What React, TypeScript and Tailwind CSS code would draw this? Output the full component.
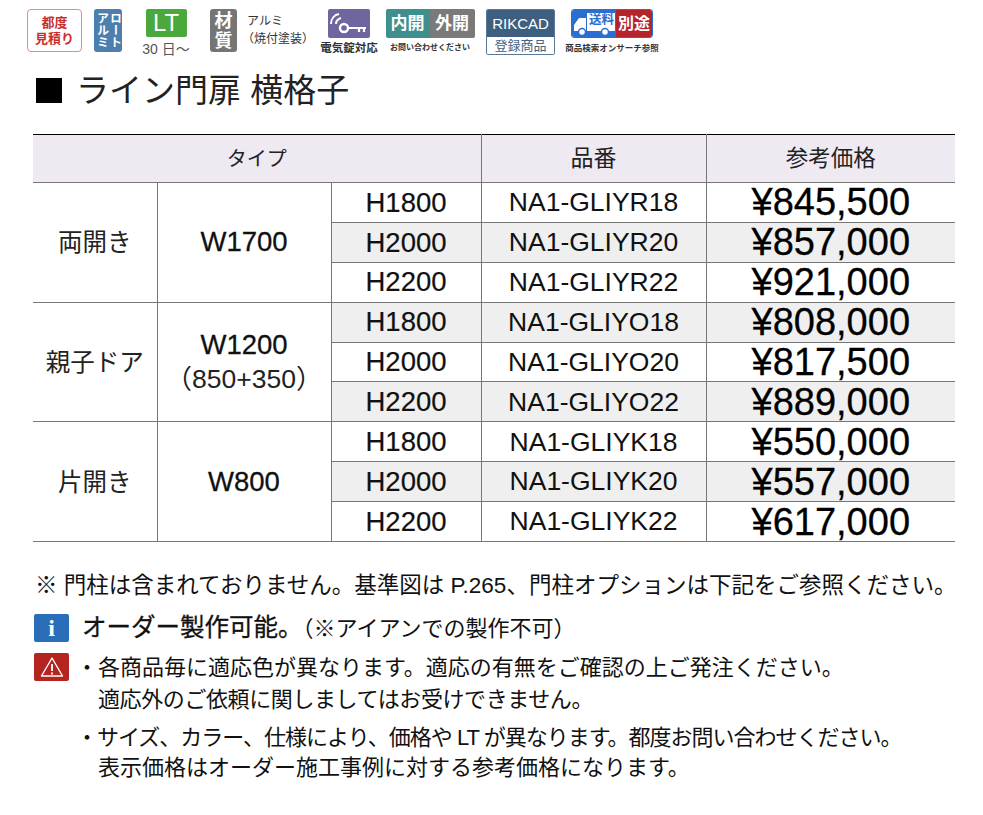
const FONT = { fontFamily: '"Liberation Sans","Noto Sans CJK JP",sans-serif' };

type Row = { h: string; code: string; price: string };
type Group = { type: string; w: string; sub?: string; rows: Row[] };

const groups: Group[] = [
  { type: "両開き", w: "W1700", rows: [
    { h: "H1800", code: "NA1-GLIYR18", price: "¥845,500" },
    { h: "H2000", code: "NA1-GLIYR20", price: "¥857,000" },
    { h: "H2200", code: "NA1-GLIYR22", price: "¥921,000" },
  ]},
  { type: "親子ドア", w: "W1200", sub: "（850+350）", rows: [
    { h: "H1800", code: "NA1-GLIYO18", price: "¥808,000" },
    { h: "H2000", code: "NA1-GLIYO20", price: "¥817,500" },
    { h: "H2200", code: "NA1-GLIYO22", price: "¥889,000" },
  ]},
  { type: "片開き", w: "W800", rows: [
    { h: "H1800", code: "NA1-GLIYK18", price: "¥550,000" },
    { h: "H2000", code: "NA1-GLIYK20", price: "¥557,000" },
    { h: "H2200", code: "NA1-GLIYK22", price: "¥617,000" },
  ]},
];

function Icons() {
  return (
    <div className="flex items-start h-[59px] pt-[9px] pl-[27px]">
      <div className="w-[55px] h-[43px] rounded-[4px] border border-[#e08a8a] bg-white flex items-center justify-center text-center text-[13px] leading-[16px] font-bold text-[#c9302c]">
        <span>都度<br />見積り</span>
      </div>
      <div className="ml-[12px] w-[28px] h-[43px] rounded-[3px] bg-[#4d7fae] flex justify-center gap-[1px] pt-[3px] text-white text-[12px] leading-[12px] font-bold">
        <span className="[writing-mode:vertical-rl] h-[38px] w-[12px] whitespace-nowrap">アルミ</span>
        <span className="[writing-mode:vertical-rl] h-[38px] w-[12px] whitespace-nowrap">ロート</span>
      </div>
      <div className="ml-[20px] w-[48px] flex flex-col items-center">
        <div className="w-[41px] h-[28px] rounded-[2px] bg-[#4aa83c] text-white text-[24px] leading-[28px] text-center">LT</div>
        <div className="text-[14px] leading-[14px] mt-[5px] text-[#555] whitespace-nowrap">30 日〜</div>
      </div>
      <div className="ml-[20px] w-[27px] h-[43px] rounded-[3px] bg-[#757575] flex flex-col items-center justify-center text-white text-[18px] leading-[20px] font-bold">
        <span>材</span><span>質</span>
      </div>
      <div className="ml-[8px] w-[72px] text-[12px] leading-[15px] text-[#333] pt-[5px] whitespace-nowrap">
        <div className="pl-[2px]">アルミ</div>
        <div className="-ml-[3px] mt-[3px]">（焼付塗装）</div>
      </div>
      <div className="ml-[3px] w-[58px] flex flex-col items-center">
        <div className="w-[42px] h-[29px] rounded-[2px] bg-[#6f659f]">
          <svg width="42" height="29" viewBox="0 0 42 29" fill="none" stroke="white">
            <circle cx="16" cy="19" r="4" strokeWidth="2.4" />
            <path d="M20 19h18M31 19v4M36 19v4" strokeWidth="2.2" />
            <path d="M3 15C3 10 6 6 11 5" strokeWidth="2" />
            <path d="M8 15c0-3 2-5 5-6" strokeWidth="2" />
          </svg>
        </div>
        <div className="text-[11.5px] leading-[12px] mt-[4px] text-[#333] font-bold whitespace-nowrap">電気錠対応</div>
      </div>
      <div className="ml-[6px] w-[92px] flex flex-col items-center">
        <div className="w-[89px] h-[29px] rounded-[2px] overflow-hidden flex text-white text-[17px] leading-[29px] font-bold">
          <div className="w-[44px] bg-[#3f8f8f] text-center">内開</div>
          <div className="flex-1 bg-[#7a7a7a] text-center">外開</div>
        </div>
        <div className="text-[8px] leading-[12px] mt-[4px] text-[#333] font-bold whitespace-nowrap">お問い合わせください</div>
      </div>
      <div className="ml-[10px] w-[69px] h-[46px] rounded-[2px] border border-[#5b7895] overflow-hidden flex flex-col">
        <div className="h-[27px] bg-[#3f5f80] text-white text-[15px] leading-[27px] text-center">RIKCAD</div>
        <div className="flex-1 bg-white text-[#47627f] text-[13px] leading-[17px] text-center">登録商品</div>
      </div>
      <div className="ml-[10px] w-[94px] flex flex-col items-center">
        <div className="w-[82px] h-[29px] rounded-[3px] overflow-hidden flex border border-[#2a6fd0]">
          <div className="relative w-[44px] bg-[#2a6fd0]">
            <svg className="absolute left-0 top-0" width="44" height="27" viewBox="0 0 44 27" fill="white">
              <path d="M2 21v-6l5-7h7v13zM15 3h28v18H15z" />
              <circle cx="10" cy="22" r="3.5" stroke="#2a6fd0" strokeWidth="1.5" />
              <circle cx="33" cy="22" r="3.5" stroke="#2a6fd0" strokeWidth="1.5" />
            </svg>
            <div className="absolute right-[2px] top-[3px] text-[#2a6fd0] text-[12.5px] leading-[14px] font-bold whitespace-nowrap">送料</div>
          </div>
          <div className="flex-1 bg-[#b5242a] text-white text-[16px] leading-[27px] font-bold text-center">別途</div>
        </div>
        <div className="text-[8.5px] leading-[12px] mt-[4px] text-[#333] font-bold whitespace-nowrap">商品検索オンサーチ参照</div>
      </div>
    </div>
  );
}

function PriceTable() {
  const cellBorder = "border-b border-[#777]";
  return (
    <table className="w-[922px] ml-[33px] table-fixed border-collapse border-t border-black text-[#111]">
      <colgroup>
        <col className="w-[124px]" />
        <col className="w-[174px]" />
        <col className="w-[150px]" />
        <col className="w-[225px]" />
        <col className="w-[249px]" />
      </colgroup>
      <thead>
        <tr className="h-[48px] bg-[#efe9f1] font-normal text-[#222]">
          <th colSpan={3} className={`${cellBorder} border-r font-normal text-[20px]`}>タイプ</th>
          <th className={`${cellBorder} border-r font-normal text-[23px]`}>品番</th>
          <th className={`${cellBorder} font-normal text-[22.5px]`}>参考価格</th>
        </tr>
      </thead>
      <tbody>
        {groups.map((g) =>
          g.rows.map((r, i) => {
            const shaded = (groups.indexOf(g) + i) % 2 === 1;
            return (
              <tr key={r.code} className="h-[39.9px] text-center">
                {i === 0 && (
                  <>
                    <td rowSpan={3} className={`${cellBorder} border-r pt-[3px] text-[24.5px] text-[#222]`}>{g.type}</td>
                    <td rowSpan={3} className={`${cellBorder} border-r`}>
                      <div className="text-[27.5px] leading-[34px] [-webkit-text-stroke:0.3px_#111]">{g.w}</div>
                      {g.sub && <div className="text-[26.5px] leading-[34px] text-[#222]">{g.sub}</div>}
                    </td>
                  </>
                )}
                <td className={`${cellBorder} border-r text-[27.5px] leading-none [-webkit-text-stroke:0.2px_#111] ${shaded ? "bg-[#efefef]" : ""}`}>{r.h}</td>
                <td className={`${cellBorder} border-r text-[26.5px] leading-none ${shaded ? "bg-[#efefef]" : ""}`}>{r.code}</td>
                <td className={`${cellBorder} text-[38px] leading-none text-black [-webkit-text-stroke:0.3px_#000] ${shaded ? "bg-[#efefef]" : ""}`}>{r.price}</td>
              </tr>
            );
          })
        )}
      </tbody>
    </table>
  );
}

export default function App() {
  return (
    <div className="w-[983px] h-[815px] bg-white text-[#111] overflow-hidden" style={FONT}>
      <Icons />
      <div className="h-[75px] pl-[36px] pt-[9px] flex items-start whitespace-nowrap">
        <div className="w-[26px] h-[25px] mt-[10px] bg-black" />
        <div className="ml-[14px] text-[33px] leading-[46px] text-[#222]">ライン門扉 横格子</div>
      </div>
      <PriceTable />
      <div className="pl-[35px] mt-[28px] text-[22.5px] leading-[32px] whitespace-nowrap">※ 門柱は含まれておりません。基準図は P.265、門柱オプションは下記をご参照ください。</div>
      <div className="flex items-center pl-[34px] mt-[12px] h-[28px]">
        <div className="w-[35px] h-[28px] rounded-[2px] bg-[#2a6db8] flex items-center justify-center text-white text-[24px] font-bold" style={{ fontFamily: '"Liberation Serif",serif' }}>i</div>
        <div className="ml-[13px] text-[24.5px] leading-[29px] whitespace-nowrap">
          <span className="[-webkit-text-stroke:0.3px_#111]">オーダー製作可能。</span><span className="text-[22px]">（※アイアンでの製作不可）</span>
        </div>
      </div>
      <div className="flex pl-[34px] mt-[11px]">
        <div className="w-[35px] h-[28px] rounded-[2px] bg-[#b3251e] flex items-center justify-center">
          <svg width="24" height="22" viewBox="0 0 24 22" fill="none" stroke="white" strokeWidth="1.4">
            <path d="M12 2 22.5 20h-21z" strokeLinejoin="round" />
            <path d="M12 8v7M12 16.5v2" strokeWidth="1.8" />
          </svg>
        </div>
        <div className="ml-[7px] -mt-[1px] text-[22px] leading-[32px] whitespace-nowrap">
          <div>・各商品毎に適応色が異なります。適応の有無をご確認の上ご発注ください。</div>
          <div className="pl-[22px] tracking-[-0.4px]">適応外のご依頼に関しましてはお受けできません。</div>
          <div className="mt-[6px] tracking-[-1px]">・サイズ、カラー、仕様により、価格や LT が異なります。都度お問い合わせください。</div>
          <div className="-mt-[2px] pl-[22px]">表示価格はオーダー施工事例に対する参考価格になります。</div>
        </div>
      </div>
    </div>
  );
}
